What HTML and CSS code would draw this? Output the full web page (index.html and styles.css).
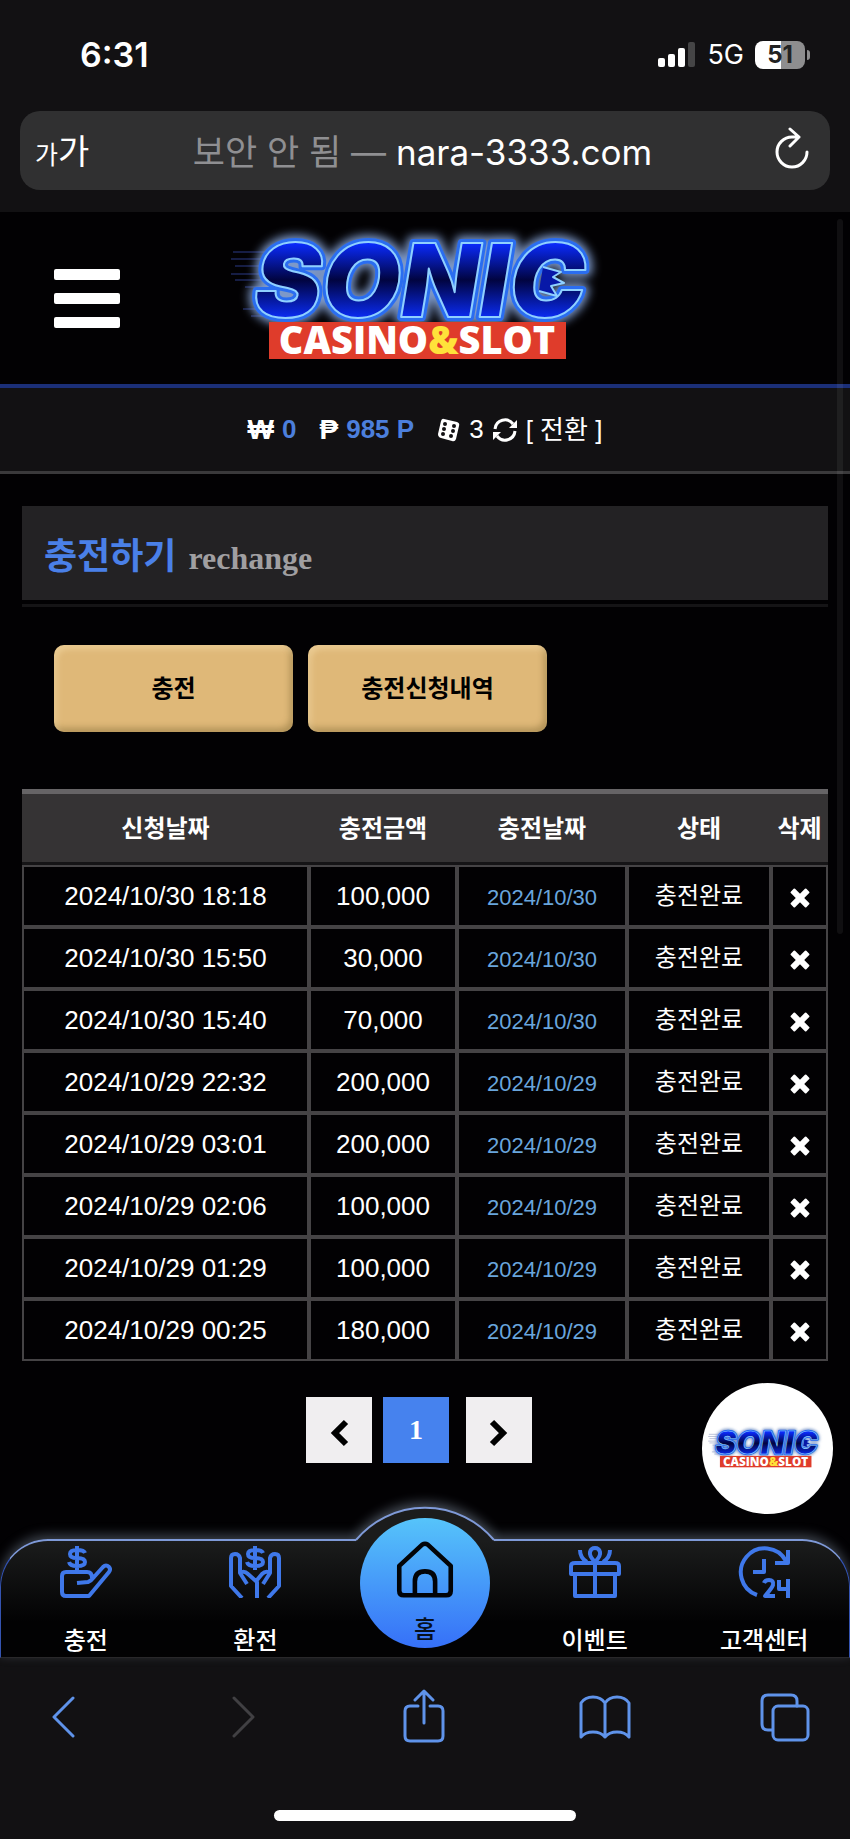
FILE: index.html
```html
<!DOCTYPE html>
<html lang="ko">
<head>
    <meta charset="UTF-8">
    <meta name="viewport" content="width=device-width, initial-scale=1.0">
    <title>충전하기</title>
    <link rel="stylesheet" href="styles.css">
</head>
<body>
    <div class="status-bar">
        <span class="time">6:31</span>
        <div class="status-right">
            <svg class="signal" width="38" height="26" viewBox="0 0 38 26">
                <rect x="0" y="16" width="7" height="9" rx="2" fill="#fff"/>
                <rect x="10" y="12" width="7" height="13" rx="2" fill="#fff"/>
                <rect x="20" y="6" width="7" height="19" rx="2" fill="#fff"/>
                <rect x="30" y="0" width="7" height="25" rx="2" fill="#454546"/>
            </svg>
            <span class="network">5G</span>
            <div class="battery">51</div>
        </div>
    </div>

    <div class="url-bar">
        <button class="text-size" aria-label="글자 크기"><small>가</small>가</button>
        <div class="address"><span>보안 안 됨 —</span> nara-3333.com</div>
        <button class="reload" aria-label="새로고침">
            <svg width="36" height="44" viewBox="0 0 36 44" fill="none" stroke="#fff" stroke-width="3" stroke-linecap="round" stroke-linejoin="round">
                <path d="M25 10H18A15 15 0 1 0 33 25M16 2l9 8l-9 9"/>
            </svg>
        </button>
    </div>

    <div class="page">
        <header class="header">
            <button class="menu" aria-label="메뉴"><i></i><i></i><i></i></button>
            <a href="#" class="logo" aria-label="SONIC CASINO&amp;SLOT">
                <svg width="388" height="146" viewBox="0 0 388 146">
                    <defs>
                        <linearGradient id="sonicFill" x1="0" y1="0" x2="0" y2="1">
                            <stop offset="0.2" stop-color="#0a2bff"/>
                            <stop offset="0.5" stop-color="#010440"/>
                            <stop offset="0.8" stop-color="#0a2bf0"/>
                        </linearGradient>
                        <filter id="glow" x="-10%" y="-20%" width="120%" height="140%">
                            <feGaussianBlur stdDeviation="5"/>
                        </filter>
                        <g id="sonicLogo">
                            <g stroke="#2b3a86" stroke-width="1">
                                <path d="M2 27h70M0 34h60M4 41h60M0 49h60M4 55h60M14 62h50M24 70h40M12 84h40M20 91h40"/>
                            </g>
                            <g class="sonic-word">
                                <text x="23" y="92" fill="#1c6cff" stroke="#7d98c8" stroke-width="14" filter="url(#glow)">SONIC</text>
                                <text x="23" y="92" fill="#1c6cff" stroke="#2a6df0" stroke-width="8">SONIC</text>
                                <text x="23" y="92" fill="url(#sonicFill)" stroke="#8fd0ff" stroke-width="2">SONIC</text>
                                <path d="M312 42l18 5l-8 5l11 6l-13 3l6 10l-18-5" fill="#0718a8" stroke="#8fd0ff" stroke-width="2"/>
                            </g>
                            <rect x="38" y="97" width="297" height="37" fill="#df3c2b"/>
                            <text class="casino-word" x="186" y="129" text-anchor="middle" fill="#fff">CASINO<tspan fill="#ffe23a">&amp;</tspan>SLOT</text>
                        </g>
                    </defs>
                    <use href="#sonicLogo"/>
                </svg>
            </a>
        </header>

        <div class="my-info">
            <span class="item"><b class="sign">₩</b> <b class="blue">0</b></span>
            <span class="item"><b class="sign">₱</b> <b class="blue">985 P</b></span>
            <span class="item">
                <svg width="24" height="26" viewBox="0 0 24 26">
                    <path d="M7 2l13 3q3 1 2 4l-3 13q-1 3-4 2L4 21q-3-1-3-4L4 4q1-3 3-2z" fill="#fff"/>
                    <g fill="#121113"><circle cx="8" cy="7" r="2"/><circle cx="7" cy="12" r="2"/><circle cx="6" cy="17" r="2"/><circle cx="17" cy="9" r="2"/><circle cx="16" cy="14" r="2"/><circle cx="14" cy="19" r="2"/></g>
                </svg>
                3
                <svg width="26" height="26" viewBox="0 0 26 26" fill="none" stroke="#fff" stroke-width="3">
                    <path d="M3 12a10 10 0 0 1 18-5M23 14a10 10 0 0 1-18 5"/>
                    <path d="M25 3v8h-8zM1 23v-8h8z" fill="#fff" stroke="none"/>
                </svg>
                <a href="#">[ 전환 ]</a>
            </span>
        </div>

        <main class="content">
            <h1 class="title">충전하기 <span>rechange</span></h1>

            <div class="tabs">
                <button class="tab">충전</button>
                <button class="tab">충전신청내역</button>
            </div>

            <table class="history">
                <thead>
                    <tr>
                        <th>신청날짜</th>
                        <th class="col-money">충전금액</th>
                        <th class="col-done">충전날짜</th>
                        <th class="col-state">상태</th>
                        <th class="col-del">삭제</th>
                    </tr>
                </thead>
                <tbody>
                    <tr><td>2024/10/30 18:18</td><td>100,000</td><td class="done">2024/10/30</td><td class="state">충전완료</td><td><button class="del" aria-label="삭제"></button></td></tr>
                    <tr><td>2024/10/30 15:50</td><td>30,000</td><td class="done">2024/10/30</td><td class="state">충전완료</td><td><button class="del" aria-label="삭제"></button></td></tr>
                    <tr><td>2024/10/30 15:40</td><td>70,000</td><td class="done">2024/10/30</td><td class="state">충전완료</td><td><button class="del" aria-label="삭제"></button></td></tr>
                    <tr><td>2024/10/29 22:32</td><td>200,000</td><td class="done">2024/10/29</td><td class="state">충전완료</td><td><button class="del" aria-label="삭제"></button></td></tr>
                    <tr><td>2024/10/29 03:01</td><td>200,000</td><td class="done">2024/10/29</td><td class="state">충전완료</td><td><button class="del" aria-label="삭제"></button></td></tr>
                    <tr><td>2024/10/29 02:06</td><td>100,000</td><td class="done">2024/10/29</td><td class="state">충전완료</td><td><button class="del" aria-label="삭제"></button></td></tr>
                    <tr><td>2024/10/29 01:29</td><td>100,000</td><td class="done">2024/10/29</td><td class="state">충전완료</td><td><button class="del" aria-label="삭제"></button></td></tr>
                    <tr><td>2024/10/29 00:25</td><td>180,000</td><td class="done">2024/10/29</td><td class="state">충전완료</td><td><button class="del" aria-label="삭제"></button></td></tr>
                </tbody>
            </table>

            <div class="pager">
                <a href="#" aria-label="이전">
                    <svg width="20" height="28" viewBox="0 0 20 28" fill="none" stroke="#000" stroke-width="6"><path d="M17 3L6 14l11 11"/></svg>
                </a>
                <a href="#" class="active">1</a>
                <a href="#" class="next" aria-label="다음">
                    <svg width="20" height="28" viewBox="0 0 20 28" fill="none" stroke="#000" stroke-width="6"><path d="M3 3l11 11L3 25"/></svg>
                </a>
            </div>
        </main>

        <!-- 하단 메뉴 -->
        <nav class="bottom-nav">
            <svg class="bump" width="170" height="64" viewBox="0 0 170 64">
                <path d="M16 48A90 90 0 0 1 154 48V50H16z" fill="#1b1c1c"/>
                <path d="M16 48A90 90 0 0 1 154 48" fill="none" stroke="#7f9ad8" stroke-width="2"/>
            </svg>
            <a href="#">
                <svg width="52" height="52" viewBox="0 0 52 52">
                    <path d="M25 7Q24 4 17 4Q10 4 10 8Q10 12 17 12Q25 12 25 16Q25 20 17 20Q10 20 9 16M17 0v24"/>
                    <path d="M17 37L28 36Q31 35 34 31L43 21Q46 18 49 21Q51 23 49 26L29 50H6Q2 50 2 46V30Q2 26 6 26H27Q32 26 32 32"/>
                </svg>
                충전
            </a>
            <a href="#">
                <svg width="52" height="52" viewBox="0 0 52 52">
                    <path d="M34 7Q33 4 26 4Q19 4 19 8Q19 12 26 12Q34 12 34 16Q34 20 26 20Q19 20 18 16M26 0v24"/>
                    <path d="M13 52L2 40V12Q2 8 6 8T11 12V27L18 38M11 27Q15 24 19 28L28 36V52M39 52L50 40V12Q50 8 46 8T41 12V27L34 38M41 27Q37 24 33 28L28 34"/>
                </svg>
                환전
            </a>
            <a href="#" class="home">
                <svg width="62" height="62" viewBox="0 0 62 62">
                    <path d="M8 59q-5 0-5-5V27L28 4q3-2 6 0l25 23v27q0 5-5 5zM20 58V44q0-11 11-11t11 11v14"/>
                </svg>
                홈
            </a>
            <a href="#">
                <svg width="52" height="52" viewBox="0 0 52 52">
                    <path d="M6 29V50H46V29M26 15V50M2 28V20q0-3 4-3h40q4 0 4 3v8zM26 16Q20 10 21 6Q22 2 26 2t5 4Q32 10 26 16M11 4q0 8 7 12M41 4q0 8-7 12"/>
                </svg>
                이벤트
            </a>
            <a href="#">
                <svg width="52" height="52" viewBox="0 0 52 52">
                    <path d="M19 49A24 24 0 1 1 48 15M50 4v13H37M26 13v13H15"/>
                    <path d="M26 37q1-3 5-3 5 0 4 5-1 3-8 11h10M41 34v9h9M50 33v19"/>
                </svg>
                고객센터
            </a>
        </nav>

        <a href="#" class="chat" aria-label="상담">
            <svg width="120" height="45" viewBox="0 0 388 146"><use href="#sonicLogo"/></svg>
        </a>
        <div class="scroll-thumb"></div>
    </div>

    <footer class="toolbar">
        <div class="tools">
            <button aria-label="뒤로"><svg width="24" height="54" viewBox="0 0 24 54"><path d="M22 9L3 28l19 19"/></svg></button>
            <button class="off" aria-label="앞으로"><svg width="24" height="54" viewBox="0 0 24 54"><path d="M2 9l19 19L2 47"/></svg></button>
            <button aria-label="공유"><svg width="42" height="54" viewBox="0 0 42 54"><path d="M15 17H7q-5 0-5 5v25q0 5 5 5h28q5 0 5-5V22q0-5-5-5h-8M21 34V3M12 11l9-9 9 9"/></svg></button>
            <button aria-label="책갈피"><svg width="52" height="54" viewBox="0 0 52 54"><path d="M26 14Q22 8 14 8T2 14V48Q6 43 14 43T26 48Q30 43 38 43T50 48V14Q46 8 38 8T26 14V48"/></svg></button>
            <button aria-label="탭"><svg width="50" height="54" viewBox="0 0 50 54"><path d="M12 41H8q-6 0-6-6V12q0-6 6-6h23q6 0 6 6v5"/><rect x="13" y="17" width="35" height="34" rx="5"/></svg></button>
        </div>
        <div class="indicator"></div>
    </footer>
</body>
</html>
```
FILE: styles.css
```css
* {
    box-sizing: border-box;
}
body {
    margin: 0;
    background-color: #121113;
    color: #fff;
    font-family: "Liberation Sans", "Noto Sans CJK KR", sans-serif;
    font-size: 24px;
}
a {
    color: inherit;
    text-decoration: none;
}
button {
    background: none;
    border: none;
    padding: 0;
    color: inherit;
    font-family: inherit;
    cursor: pointer;
}
svg {
    display: block;
}

/* 상태바 */
.status-bar {
    display: flex;
    justify-content: space-between;
    align-items: center;
    height: 111px;
    padding: 0 40px 2px 80px;
    font-family: Inter, sans-serif;
}
.time {
    font-size: 34px;
    font-weight: 600;
}
.status-right {
    display: flex;
    align-items: center;
    gap: 11px;
}
.network {
    font-size: 27px;
}
.battery {
    position: relative;
    width: 50px;
    height: 28px;
    margin-right: 5px;
    border-radius: 8px;
    background: linear-gradient(to right, #fff 52%, #8e8e8f 52%);
    color: #222;
    font-size: 24px;
    font-weight: 700;
    line-height: 28px;
    text-align: center;
}
.battery::after {
    content: "";
    position: absolute;
    right: -5px;
    top: 9px;
    width: 3px;
    height: 10px;
    border-radius: 0 3px 3px 0;
    background-color: #8e8e8f;
}
.url-bar {
    display: grid;
    grid-template-columns: 1fr auto 1fr;
    align-items: center;
    height: 79px;
    margin: 0 20px 22px;
    padding: 0 20px 3px 15px;
    border-radius: 20px;
    background-color: #303031;
    font-family: Inter, "Noto Sans CJK KR", sans-serif;
}
.text-size {
    justify-self: start;
    font-size: 34px;
}
.text-size small {
    font-size: 25px;
}
.address {
    font-size: 35px;
}
.address span {
    color: #8f8f92;
}
.reload {
    justify-self: end;
}

/* 본문 */
.page {
    position: relative;
    background-color: #020103;
}
.header {
    display: grid;
    grid-template-columns: 1fr auto 1fr;
    align-items: center;
    height: 176px;
    padding: 0 54px;
    border-bottom: 4px solid #1b2f78;
}
.menu {
    display: flex;
    flex-direction: column;
    gap: 13px;
    width: 66px;
}
.menu i {
    height: 11px;
    border-radius: 2px;
    background-color: #fff;
}
.sonic-word {
    font-family: Inter, sans-serif;
    font-size: 102px;
    font-weight: 900;
    font-style: italic;
    stroke-linejoin: round;
}
.casino-word {
    font-family: "Open Sans", sans-serif;
    font-size: 38px;
    font-weight: 800;
}
.my-info {
    display: flex;
    justify-content: center;
    align-items: center;
    gap: 23px;
    height: 86px;
    border-bottom: 3px solid #3a393b;
    background-color: #121113;
    font-size: 26px;
}
.item {
    display: flex;
    align-items: center;
    gap: 8px;
}
.item a,
.sign {
    line-height: 30px;
}
.sign {
    font-size: 28px;
}
.blue {
    color: #4c7fdc;
}
.content {
    padding: 32px 22px 0;
}
.title {
    display: flex;
    align-items: baseline;
    gap: 12px;
    height: 94px;
    margin: 0;
    padding: 26px 22px 0;
    background-color: #232224;
    box-shadow: 0 4px #020103, 0 7px #151416;
    color: #4a80e8;
    font-size: 36px;
    line-height: 50px;
}
.title span {
    color: #a09fa1;
    font-family: "Liberation Serif", serif;
    font-size: 32px;
}
.tabs {
    display: flex;
    gap: 15px;
    padding: 45px 32px 57px;
}
.tab {
    width: 239px;
    height: 87px;
    padding-bottom: 4px;
    border-radius: 10px;
    background-color: #dfb878;
    box-shadow: inset 3px 4px 6px rgba(255, 235, 190, 0.4), inset -3px -4px 6px rgba(110, 90, 40, 0.4);
    color: #000;
    font-size: 24px;
    font-weight: 700;
}
.history {
    width: 100%;
    border-collapse: separate;
    border-spacing: 0;
    table-layout: fixed;
    text-align: center;
}
.history th {
    height: 76px;
    padding: 0 0 4px;
    border-top: 5px solid #666466;
    border-bottom: 3px solid #151416;
    background-color: #353334;
    font-size: 24px;
    font-weight: 700;
}
.history td {
    height: 62px;
    padding: 0;
    border: 2px solid #454345;
    font-size: 26px;
}
.col-money {
    width: 148px;
}
.col-done {
    width: 170px;
}
.col-state {
    width: 144px;
}
.col-del {
    width: 57px;
}
.history .done {
    padding-top: 4px;
    color: #69a5dc;
    font-size: 22px;
}
.history .state {
    padding-bottom: 6px;
    font-size: 24px;
}
.del {
    position: relative;
    width: 20px;
    height: 20px;
    vertical-align: middle;
}
.del::before,
.del::after {
    content: "";
    position: absolute;
    left: -1px;
    top: 7px;
    width: 22px;
    height: 6px;
    border-radius: 1px;
    background-color: #fff;
    transform: rotate(45deg);
}
.del::after {
    transform: rotate(-45deg);
}
.pager {
    display: flex;
    justify-content: center;
    gap: 11px;
    padding: 36px 12px 76px 0;
}
.pager a {
    display: flex;
    justify-content: center;
    align-items: center;
    width: 66px;
    height: 66px;
    background-color: #f0eef0;
    font-family: "Liberation Serif", serif;
    font-size: 28px;
    font-weight: 700;
}
.pager svg {
    margin-top: 6px;
}
.pager .active {
    background-color: #4682ee;
}
.pager .next {
    margin-left: 6px;
}

/* 하단 메뉴 */
.bottom-nav {
    position: relative;
    display: grid;
    grid-template-columns: repeat(5, 1fr);
    height: 119px;
    border: 1px solid #3453b0;
    border-top: 2px solid #7f9ad8;
    border-bottom-color: #29282a;
    border-radius: 48px 48px 0 0;
    background: linear-gradient(#1b1c1c, #020203 70%);
    box-shadow: 0 -4px 12px rgba(170, 190, 210, 0.35);
}
.bump {
    position: absolute;
    left: calc(50% - 85px);
    top: -49px;
    filter: drop-shadow(0 -4px 6px rgba(170, 190, 210, 0.4));
    clip-path: inset(-20px 0 14px 0);
}
.bottom-nav a {
    position: relative;
    display: flex;
    flex-direction: column;
    align-items: center;
    gap: 25px;
    padding-top: 5px;
    font-size: 24px;
    font-weight: 500;
    line-height: 36px;
}
.bottom-nav a svg {
    fill: none;
    stroke: #3f78ea;
    stroke-width: 4;
    stroke-linejoin: round;
}
.bottom-nav .home {
    justify-self: center;
    width: 130px;
    height: 130px;
    margin-top: -23px;
    padding-top: 23px;
    gap: 14px;
    border-radius: 50%;
    background: linear-gradient(#56c4fa, #3670f8);
    color: #06101e;
}
.bottom-nav .home svg {
    stroke: #020408;
    stroke-width: 5;
}
.chat {
    position: absolute;
    right: 17px;
    bottom: 144px;
    display: flex;
    justify-content: center;
    align-items: center;
    width: 131px;
    height: 131px;
    border-radius: 50%;
    background-color: #fff;
}
.scroll-thumb {
    position: absolute;
    right: 7px;
    top: 7px;
    width: 6px;
    height: 715px;
    border-radius: 3px;
    background-color: rgba(255, 255, 255, 0.06);
}

/* 브라우저 툴바 */
.toolbar {
    height: 181px;
    padding-top: 31px;
}
.tools {
    display: flex;
    justify-content: space-between;
    padding: 0 40px 0 38px;
}
.tools button {
    display: flex;
    justify-content: center;
    width: 50px;
}
.tools svg {
    flex-shrink: 0;
    fill: none;
    stroke: #5f93ea;
    stroke-width: 3;
    stroke-linecap: round;
    stroke-linejoin: round;
}
.tools .off svg {
    stroke: #414043;
}
.indicator {
    width: 302px;
    height: 11px;
    margin: 67px auto 0;
    border-radius: 6px;
    background-color: #fff;
}
```
